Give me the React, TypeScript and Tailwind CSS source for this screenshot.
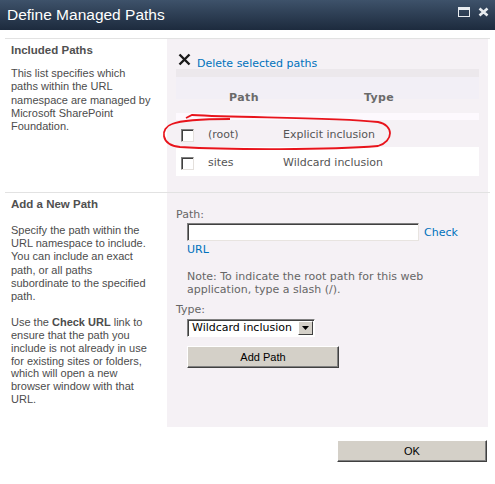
import React from "react";

const tahoma = { fontFamily: '"Liberation Sans", Arial, sans-serif' };
const verdana = { fontFamily: '"DejaVu Sans", Verdana, sans-serif' };

function Checkbox() {
  return (
    <span className="block w-[13px] h-[13px] bg-white border border-t-[#808080] border-l-[#808080] border-b-[#e4e0dc] border-r-[#e4e0dc] shadow-[inset_1px_1px_0_#404040]" />
  );
}

function RaisedButton({ label, className }: { label: string; className: string }) {
  return (
    <button
      className={`bg-[#d4d0c8] text-black text-[11px] border border-t-white border-l-white border-b-[#404040] border-r-[#404040] shadow-[inset_-1px_-1px_0_#808080] ${className}`}
      style={tahoma}
    >
      {label}
    </button>
  );
}

export default function App() {
  return (
    <div className="relative w-[495px] h-[484px] bg-white overflow-hidden">
      {/* title bar */}
      <div className="h-[30px] flex items-center justify-between pl-[7px] pr-[6px] bg-gradient-to-b from-[#3e526a] to-[#1d2b3e]">
        <span className="text-white text-[15.5px]" style={tahoma}>
          Define Managed Paths
        </span>
        <div className="flex items-center gap-[8px] -mt-[6px]">
          <span className="block w-[12px] h-[10px] border border-[#e8ecf0] border-t-[3px]" />
          <svg width="11" height="10" viewBox="0 0 11 10">
            <path d="M1.5 1.5 L9.5 8.5 M9.5 1.5 L1.5 8.5" stroke="#e8ecf0" strokeWidth="2.6" />
          </svg>
        </div>
      </div>

      <div className="px-[5px] pt-[8px]">
        {/* Included Paths */}
        <div className="flex border-t border-[#e2e2e2] h-[154px]">
          <div className="w-[162px] pl-[6px] pt-[5px] text-[#4c4c4c] text-[11px]" style={tahoma}>
            <div className="font-bold text-[11.5px] leading-[13px] text-[#505050]">Included Paths</div>
            <div className="mt-[10px] leading-[13.3px] whitespace-nowrap">
              This list specifies which
              <br />
              paths within the URL
              <br />
              namespace are managed by
              <br />
              Microsoft SharePoint
              <br />
              Foundation.
            </div>
          </div>
          <div className="flex-1 bg-[#f5f1f5] mr-[2px] pl-[9px] pr-[9px] pt-[13px]" style={verdana}>
            <div className="flex items-end h-[17px]">
              <svg width="13" height="13" viewBox="0 0 13 13" className="ml-[2px] mb-[3px]">
                <path d="M1.5 1.5 L11.5 11.5 M11.5 1.5 L1.5 11.5" stroke="#1a1a1a" strokeWidth="2.4" />
              </svg>
              <span className="ml-[6px] -mb-[1px] text-[11px] leading-[13px] text-[#0072bc]">Delete selected paths</span>
            </div>
            <div className="h-[8px] bg-[#ece8ec]" />
            <div className="h-[22px] bg-[#f2eff6] flex items-start pt-[14px] text-[11px] leading-[13px] font-bold text-[#6a6a6a]">
              <span className="ml-[53px] tracking-[0.4px]">Path</span>
              <span className="ml-[105px] tracking-[0.4px]">Type</span>
            </div>
            <div className="h-[14px]" />
            <div className="h-[7px] bg-[#fdf9fe]" />
            <div className="h-[27px] flex items-center pt-[4px] text-[11px] text-[#555]">
              <span className="ml-[5px]">
                <Checkbox />
              </span>
              <span className="ml-[14px] w-[75px]">(root)</span>
              <span>Explicit inclusion</span>
            </div>
            <div className="h-[29px] bg-white flex items-center pt-[4px] text-[11px] text-[#555]">
              <span className="ml-[5px]">
                <Checkbox />
              </span>
              <span className="ml-[14px] w-[75px]">sites</span>
              <span>Wildcard inclusion</span>
            </div>
          </div>
        </div>

        {/* Add a New Path */}
        <div className="flex border-t border-[#e2e2e2] h-[235px]">
          <div className="w-[162px] pl-[6px] pt-[5px] text-[#4c4c4c] text-[11px]" style={tahoma}>
            <div className="font-bold text-[11.5px] leading-[13px] text-[#505050]">Add a New Path</div>
            <div className="mt-[13px] leading-[13.2px] whitespace-nowrap">
              Specify the path within the
              <br />
              URL namespace to include.
              <br />
              You can include an exact
              <br />
              path, or all paths
              <br />
              subordinate to the specified
              <br />
              path.
            </div>
            <div className="mt-[13px] leading-[12.8px] whitespace-nowrap">
              Use the <b>Check URL</b> link to
              <br />
              ensure that the path you
              <br />
              include is not already in use
              <br />
              for existing sites or folders,
              <br />
              which will open a new
              <br />
              browser window with that
              <br />
              URL.
            </div>
          </div>
          <div className="flex-1 bg-[#f5f1f5] mr-[2px] pl-[9px] pt-[15px] text-[11px] text-[#666]" style={verdana}>
            <div className="leading-[13px]">Path:</div>
            <div className="flex items-center ml-[11px] mt-[2px]">
              <span className="block w-[232px] h-[18px] bg-white border border-t-[#808080] border-l-[#808080] border-b-[#e8e4e0] border-r-[#e8e4e0] shadow-[inset_1px_1px_0_#404040]" />
              <span className="ml-[5px] text-[#0072bc] leading-[13px]">Check</span>
            </div>
            <div className="ml-[11px] mt-[2px] leading-[13px] text-[#0072bc]">URL</div>
            <div className="ml-[11px] mt-[14px] leading-[13px]">
              Note: To indicate the root path for this web
              <br />
              application, type a slash (/).
            </div>
            <div className="mt-[7px] leading-[13px]">Type:</div>
            <div className="ml-[11px] mt-[3px] flex w-[128px] h-[18px] bg-white border border-t-[#808080] border-l-[#808080] border-b-white border-r-white shadow-[inset_1px_1px_0_#404040]">
              <span className="flex-1 pl-[4px] text-black text-[11px] leading-[16px]">Wildcard inclusion</span>
              <span className="w-[15px] my-[1px] mr-[1px] flex items-center justify-center bg-[#d4d0c8] border border-t-white border-l-white border-b-[#404040] border-r-[#404040]">
                <svg width="7" height="4" viewBox="0 0 7 4">
                  <path d="M0 0 H7 L3.5 4 Z" fill="#000" />
                </svg>
              </span>
            </div>
            <RaisedButton label="Add Path" className="block ml-[11px] mt-[9px] w-[152px] h-[22px]" />
          </div>
        </div>

        <div className="flex justify-end pr-[3px] pt-[13px]">
          <RaisedButton label="OK" className="w-[150px] h-[22px]" />
        </div>
      </div>

      {/* red annotation */}
      <svg className="absolute left-0 top-0 pointer-events-none" width="495" height="484">
        <path
          d="M186 118 L192 115 C240 118 330 117 378 122 C394 125 394 141 378 146 C330 150 230 150 180 147 C160 145 160 128 172 124 C182 120 200 119 230 119"
          fill="none"
          stroke="#e8141c"
          strokeWidth="1.8"
        />
      </svg>
    </div>
  );
}
